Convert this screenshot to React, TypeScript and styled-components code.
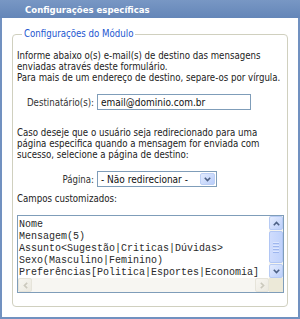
import React from "react";
import styled, { createGlobalStyle } from "styled-components";

const SANS = `'DejaVu Sans Condensed', 'DejaVu Sans', sans-serif`;
const MONO = `'Liberation Mono', 'Courier New', monospace`;

const Global = createGlobalStyle`
  html, body { margin: 0; padding: 0; background: #fff; }
  body { font-family: ${SANS}; font-size: 9.6px; color: #222; }
  * { box-sizing: border-box; }
`;

const Panel = styled.div`
  width: 300px;
  height: 319px;
  border: 2px solid #7191c0;
  border-top: 0;
  display: flex;
  flex-direction: column;
  background: #fff;
`;

const Header = styled.div`
  height: 18px;
  flex: none;
  background: linear-gradient(#7897c4, #6486b8);
  color: #fff;
  font-weight: bold;
  font-size: 9.5px;
  display: flex;
  align-items: center;
  margin: 0 -2px;
  padding-left: 25px;
`;

const Body = styled.div`
  flex: 1;
  padding: 10px 10px 0 10px;
`;

const Fieldset = styled.fieldset`
  margin: 0;
  border: 1px solid #d0d0bf;
  border-radius: 4px;
  padding: 10px 3px 13px 4px;
  min-width: 0;
`;

const Legend = styled.legend`
  color: #2356d0;
  padding: 0 2px;
  margin-left: 5px;
  line-height: 12px;
`;

const Para = styled.p<{ $mt?: number }>`
  margin: ${(p) => p.$mt ?? 0}px 0 0 0;
  line-height: 11px;
`;

const FieldRow = styled.div<{ $mt: number }>`
  display: flex;
  align-items: center;
  margin-top: ${(p) => p.$mt}px;
`;

const Label = styled.label`
  width: 80px;
  text-align: right;
  padding-right: 3px;
  color: #333;
`;

const TextInput = styled.input`
  width: 154px;
  height: 16px;
  border: 1px solid #7f9db9;
  font-family: ${SANS};
  font-size: 10px;
  color: #111;
  padding: 0 3px;
  margin: 0;
  outline: none;
  background: #fff;
`;

const SelectBox = styled.div`
  width: 120px;
  height: 16px;
  border: 1px solid #7f9db9;
  display: flex;
  align-items: stretch;
  background: #fff;
  padding: 1px;
`;

const SelectText = styled.span`
  flex: 1;
  display: flex;
  align-items: center;
  padding-left: 2px;
  font-size: 10px;
  color: #111;
`;

const DropButton = styled.span`
  width: 15px;
  border: 1px solid #bccff5;
  border-radius: 2px;
  background: linear-gradient(135deg, #e2ebfe, #b9cdfa);
  display: flex;
  align-items: center;
  justify-content: center;
`;

const Caption = styled.div`
  margin-top: 6px;
  line-height: 11px;
`;

const TextBox = styled.div`
  margin-top: 11px;
  width: 267px;
  height: 78px;
  border: 1px solid #7f9db9;
  display: grid;
  grid-template-columns: 1fr 14px;
  grid-template-rows: 1fr 14px;
  background: #fff;
`;

const TextContent = styled.div`
  padding: 3px 0 0 1px;
  font-family: ${MONO};
  font-size: 10px;
  line-height: 12px;
  white-space: pre;
  overflow: hidden;
  color: #2a2a2a;
`;

const VScroll = styled.div`
  display: flex;
  flex-direction: column;
  background: #f4f3ee;
`;

const ScrollButton = styled.span<{ $disabled?: boolean }>`
  flex: none;
  width: 14px;
  height: 14px;
  border: 1px solid ${(p) => (p.$disabled ? "#e6e4da" : "#b7cbf4")};
  border-radius: 2px;
  background: ${(p) =>
    p.$disabled
      ? "linear-gradient(135deg, #f7f6f1, #ebe9e0)"
      : "linear-gradient(135deg, #e4ecfe, #bccffa)"};
  display: flex;
  align-items: center;
  justify-content: center;
`;

const Track = styled.div`
  flex: 1;
  display: flex;
  flex-direction: column;
  padding: 1px 0;
`;

const Thumb = styled.div`
  flex: 1;
  border: 1px solid #b1c6f4;
  border-radius: 2px;
  background: linear-gradient(90deg, #cfdcfd, #c0d2fb);
  display: flex;
  flex-direction: column;
  align-items: center;
  justify-content: center;
  gap: 1px;
`;

const Grip = styled.span`
  width: 6px;
  height: 1px;
  background: #dde7fe;
  box-shadow: 0 1px 0 #9eb6ee;
  margin-bottom: 1px;
`;

const HScroll = styled.div`
  display: flex;
  background: #f7f6f2;
`;

const HTrack = styled.div`
  flex: 1;
`;

const Corner = styled.div`
  background: #ece9d8;
`;

type Dir = "up" | "down" | "left" | "right";
const Chevron = ({ dir, color }: { dir: Dir; color: string }) => {
  const rot = { up: 180, down: 0, left: 90, right: -90 }[dir];
  return (
    <svg width="7" height="5" viewBox="0 0 7 5" style={{ transform: `rotate(${rot}deg)` }}>
      <path d="M0.8 0.8 L3.5 3.6 L6.2 0.8" fill="none" stroke={color} strokeWidth="1.6" />
    </svg>
  );
};

const lines = [
  "Nome",
  "Mensagem(5)",
  "Assunto<Sugestão|Criticas|Dúvidas>",
  "Sexo(Masculino|Feminino)",
  "Preferências[Politica|Esportes|Economia]",
];

export default function App() {
  return (
    <>
      <Global />
      <Panel>
        <Header>Configurações específicas</Header>
        <Body>
          <Fieldset>
            <Legend>Configurações do Módulo</Legend>
            <Para>
              Informe abaixo o(s) e-mail(s) de destino das mensagens
              <br />
              enviadas através deste formulário.
              <br />
              Para mais de um endereço de destino, separe-os por vírgula.
            </Para>
            <FieldRow $mt={11}>
              <Label>Destinatário(s):</Label>
              <TextInput readOnly value="email@dominio.com.br" />
            </FieldRow>
            <Para $mt={17}>
              Caso deseje que o usuário seja redirecionado para uma
              <br />
              página especifica quando a mensagem for enviada com
              <br />
              sucesso, selecione a página de destino:
            </Para>
            <FieldRow $mt={11}>
              <Label>Página:</Label>
              <SelectBox>
                <SelectText>- Não redirecionar -</SelectText>
                <DropButton>
                  <Chevron dir="down" color="#4d6185" />
                </DropButton>
              </SelectBox>
            </FieldRow>
            <Caption>Campos customizados:</Caption>
            <TextBox>
              <TextContent>{lines.join("\n")}</TextContent>
              <VScroll>
                <ScrollButton>
                  <Chevron dir="up" color="#4d6185" />
                </ScrollButton>
                <Track>
                  <Thumb>
                    <Grip />
                    <Grip />
                    <Grip />
                    <Grip />
                  </Thumb>
                </Track>
                <ScrollButton>
                  <Chevron dir="down" color="#4d6185" />
                </ScrollButton>
              </VScroll>
              <HScroll>
                <ScrollButton $disabled>
                  <Chevron dir="left" color="#cbc9bd" />
                </ScrollButton>
                <HTrack />
                <ScrollButton $disabled>
                  <Chevron dir="right" color="#cbc9bd" />
                </ScrollButton>
              </HScroll>
              <Corner />
            </TextBox>
          </Fieldset>
        </Body>
      </Panel>
    </>
  );
}
